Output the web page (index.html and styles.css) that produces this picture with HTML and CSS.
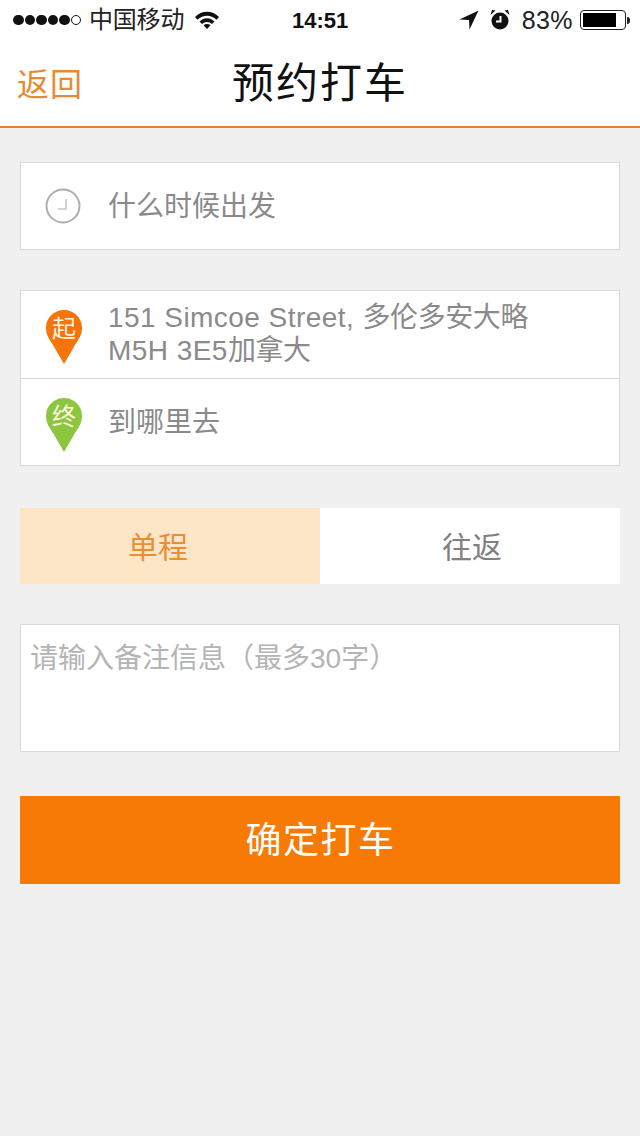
FILE: index.html
```html
<!DOCTYPE html>
<html lang="zh">
<head>
<meta charset="utf-8">
<title>预约打车</title>
<link rel="stylesheet" href="styles.css">
</head>
<body>
<div class="page">
  <div class="status">
    <div class="status-left">
      <span class="signal"><i></i><i></i><i></i><i></i><i></i><i class="off"></i></span>
      <span class="carrier">中国移动</span>
      <svg class="wifi" width="24" height="18" viewBox="0 0 24 18"><path d="M0 6C6.500 -1 17.500 -1 24 6L21.500 8.800C16 3.500 8 3.500 2.500 8.800Z"/><path d="M4.500 10.500C9 6 15 6 19.500 10.500L17 13C14 10.200 10 10.200 7 13Z"/><path d="M8.500 14.300C10.500 12.600 13.500 12.600 15.500 14.300L12 18Z"/></svg>
    </div>
    <div class="time">14:51</div>
    <div class="status-right">
      <svg class="arrow" width="20" height="20" viewBox="0 0 20 20"><path d="M19.500 .5 .5 9.500 10 10 10.500 19.500Z"/></svg>
      <svg class="alarm" width="22" height="22" viewBox="0 0 22 22"><circle cx="11" cy="12" r="8.500"/><path class="hand" d="M11.500 7v5.500H7" /><path d="M1.500 6 6.500 1.500 3 1ZM20.500 6 15.500 1.500 19 1Z"/></svg>
      <span class="pct">83%</span>
      <span class="battery"><span class="level"></span></span><span class="nub"></span>
    </div>
  </div>

  <header class="nav">
    <a class="back">返回</a>
    <h1 class="title">预约打车</h1>
  </header>

  <main class="content">
    <section class="card row-time">
      <svg class="clock" width="36" height="36" viewBox="0 0 36 36"><circle cx="18" cy="18" r="16.500"/><path class="clock-hand" d="M21 11v10h-8"/></svg>
      <span class="field">什么时候出发</span>
    </section>

    <section class="card route">
      <div class="route-row from">
        <span class="pin pin-o"><svg width="38" height="56" viewBox="0 0 38 56"><path d="M19 1C9 1 1 9 1 18.500C1 26 4 30 8 36L19 55L30 36C34 30 37 26 37 18.500C37 9 29 1 19 1Z"/></svg><b>起</b></span>
        <span class="field addr"><span class="latin">151 Simcoe Street, </span>多伦多安大略<br><span class="latin">M5H 3E5</span>加拿大</span>
      </div>
      <div class="route-row to">
        <span class="pin pin-g"><svg width="38" height="56" viewBox="0 0 38 56"><path d="M19 1C9 1 1 9 1 18.500C1 26 4 30 8 36L19 55L30 36C34 30 37 26 37 18.500C37 9 29 1 19 1Z"/></svg><b>终</b></span>
        <span class="field where">到哪里去</span>
      </div>
    </section>

    <section class="tabs">
      <div class="tab active">单程</div>
      <div class="tab">往返</div>
    </section>

    <section class="card note">请输入备注信息（最多30字）</section>

    <button class="submit">确定打车</button>
  </main>
</div>
</body>
</html>
```
FILE: styles.css
```css
* { box-sizing: border-box; }
html, body { margin: 0; padding: 0; }
body {
  width: 640px;
  height: 1136px;
  overflow: hidden;
  background: #f0f0f0;
  font-family: "Liberation Sans", "Noto Sans CJK SC", sans-serif;
}
.page { width: 640px; height: 1136px; display: flex; flex-direction: column; }

.status {
  height: 40px;
  background: #fff;
  display: flex;
  align-items: center;
  justify-content: space-between;
  padding: 0 10px 0 13px;
  position: relative;
  color: #000;
}
.status-left, .status-right { display: flex; align-items: center; }
.signal { display: flex; gap: 1px; }
.signal i { width: 10.500px; height: 10.500px; border-radius: 50%; background: #111; display: block; }
.signal i.off { background: #fff; border: 1.200px solid #111; }
.carrier { font-size: 24px; margin-left: 8px; line-height: 30px; color: #222; letter-spacing: -.2px; }
.wifi { margin-left: 11px; fill: #111; }
.time {
  position: absolute;
  left: 292px;
  top: 6px;
  font-size: 22px;
  font-weight: 700;
  line-height: 30px;
  color: #111;
}
.arrow { fill: #111; margin-right: 10px; }
.alarm { fill: #111; margin-right: 11px; }
.alarm .hand { fill: none; stroke: #fff; stroke-width: 2; }
.pct { font-size: 25px; color: #222; margin-right: 7px; letter-spacing: .4px; line-height: 30px; }
.battery {
  width: 46px; height: 20px;
  border: 1.500px solid #222;
  border-radius: 4px;
  padding: 2px;
  display: block;
}
.level { display: block; width: 83%; height: 100%; background: #000; }
.nub { width: 3px; height: 7px; background: #222; border-radius: 0 3px 3px 0; margin-left: 1px; }

.nav {
  height: 88px;
  background: #fff;
  border-bottom: 2px solid #e0813a;
  display: flex;
  align-items: center;
  justify-content: center;
  position: relative;
}
.back {
  position: absolute;
  left: 17px;
  top: 25px;
  font-size: 32px;
  line-height: 40px;
  letter-spacing: 1px;
  color: #e68a36;
}
.title { margin: 2px 0 0; font-size: 42px; font-weight: 400; line-height: 50px; color: #111; letter-spacing: 2px; }

.content { padding: 34px 20px 0; display: flex; flex-direction: column; }
.card { background: #fff; border: 1px solid #d9d9d9; }
.field { color: #8a8a8a; font-size: 28px; line-height: 33px; }
.row-time {
  height: 88px;
  display: flex;
  align-items: center;
  padding-left: 24px;
  gap: 27px;
  margin-bottom: 40px;
}
.clock { fill: none; stroke: #aeaeae; stroke-width: 2; }
.clock-hand { stroke: #c4c4c4; stroke-width: 1.500; }
.route { display: flex; flex-direction: column; height: 176px; margin-bottom: 42px; }
.route-row { display: flex; align-items: center; padding-left: 24px; gap: 25px; flex: 1; }
.from { border-bottom: 1px solid #d4d4d4; }
.pin { position: relative; width: 38px; height: 56px; display: block; flex: none; margin-top: 6px; }
.pin svg { display: block; }
.pin-o svg { fill: #f5750a; }
.pin-g svg { fill: #8cc63f; }
.pin b {
  position: absolute;
  left: 0; top: 5px;
  width: 38px;
  text-align: center;
  font: 400 24px/26px "Noto Sans CJK SC", sans-serif;
  color: #fff3e0;
}
.addr { letter-spacing: -.4px; }
.addr .latin { letter-spacing: .45px; }
.where { margin-top: 2px; }
.tabs { display: flex; height: 76px; margin-bottom: 40px; }
.tab {
  flex: 0 0 300px;
  background: #fff;
  display: flex;
  align-items: center;
  justify-content: center;
  font-size: 30px;
  color: #808080;
  padding: 0 0 2px 4px;
}
.tab.active { background: #fde6c6; color: #e88f35; padding: 0 24px 2px 0; }
.note {
  height: 128px;
  padding: 16px 9px;
  font-size: 28px;
  line-height: 36px;
  color: #b4b4b4;
  margin-bottom: 44px;
}
.submit {
  height: 88px;
  border: 0;
  background: #f77a04;
  color: #fff;
  font: 400 36px/44px "Liberation Sans", "Noto Sans CJK SC", sans-serif;
  padding: 2px 0 0 1px;
  letter-spacing: 1.500px;
}
```
